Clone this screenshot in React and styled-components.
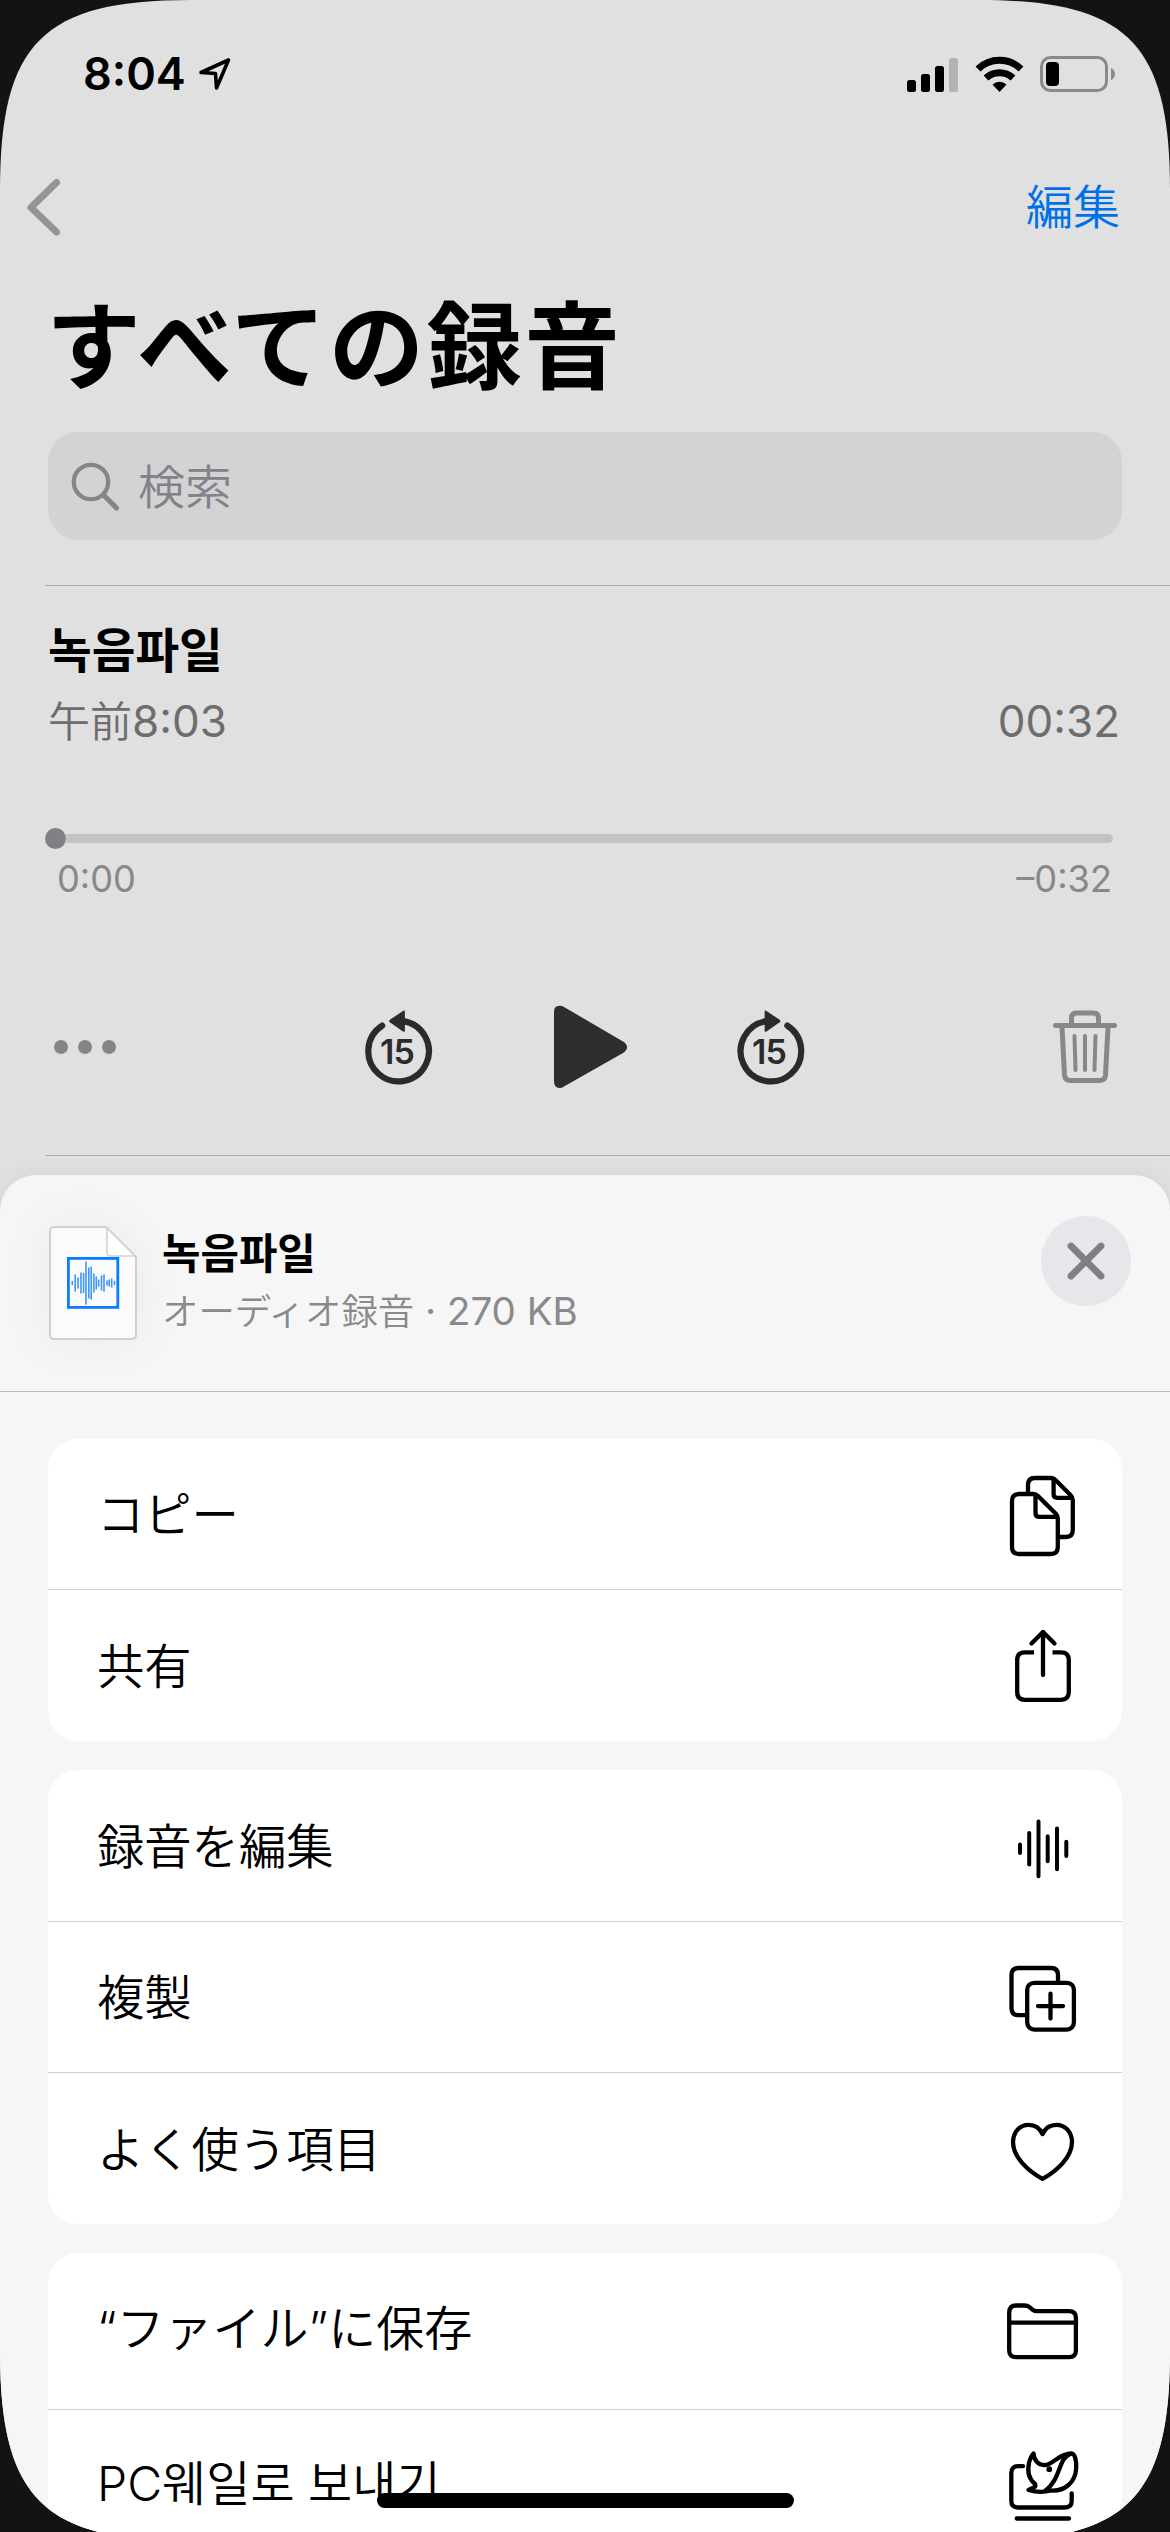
import React from "react";
import styled, { createGlobalStyle } from "styled-components";

const GlobalStyle = createGlobalStyle`
  * { box-sizing: border-box; }
  html, body { margin: 0; padding: 0; background: #131313; }
  svg { display: block; flex: none; }
`;

const latin = `Inter, Roboto, "Liberation Sans"`;

const Screen = styled.main`
  position: relative;
  display: flex;
  flex-direction: column;
  width: 1170px;
  height: 2532px;
  overflow: hidden;
  background: #e0e0e0;
  color: #000;
  font-family: ${latin}, "Noto Sans CJK JP", "Noto Sans CJK KR", sans-serif;
  clip-path: path("M0 190 C0 43 43 0 190 0 H980 C1127 0 1170 43 1170 190 V2351 C1170 2498 1127 2541 980 2541 H190 C43 2541 0 2498 0 2351 Z");
`;

const StatusBar = styled.header`
  display: flex;
  justify-content: space-between;
  align-items: center;
  height: 148px;
  padding: 0 54px 0 83px;
`;

const Clock = styled.div`
  display: flex;
  align-items: center;
  gap: 12px;
  font-size: 45px;
  font-weight: 600;
  line-height: 56px;
`;

const StatusIcons = styled.div`
  display: flex;
  align-items: center;
  gap: 16px;
`;

const NavBar = styled.nav`
  display: flex;
  justify-content: space-between;
  align-items: center;
  height: 117px;
  padding: 0 50px 0 24px;
`;

const EditLink = styled.a`
  margin-bottom: 5px;
  color: #0070ea;
  font-family: "Noto Sans CJK JP", sans-serif;
  font-size: 47px;
  font-weight: 350;
  line-height: 60px;
`;

const Title = styled.h1`
  margin: 16px 0 0 46px;
  font-family: "Noto Sans CJK JP", sans-serif;
  font-size: 95px;
  font-weight: 700;
  letter-spacing: 2.8px;
  line-height: 120px;
`;

const SearchField = styled.div`
  display: flex;
  align-items: center;
  gap: 18px;
  height: 108px;
  margin: 31px 48px 0;
  padding-left: 22px;
  border-radius: 30px;
  background: #d3d3d3;
`;

const Placeholder = styled.span`
  margin-bottom: 4px;
  color: #82828a;
  font-family: "Noto Sans CJK JP", sans-serif;
  font-size: 47px;
  font-weight: 350;
  line-height: 60px;
`;

const Hairline = styled.div`
  flex: none;
  height: 1px;
  margin: ${(p) => p.$top}px 0 0 45px;
  background: #acacae;
`;

const RecordingName = styled.h2`
  margin: 32px 0 0 48px;
  font-family: "Noto Sans CJK KR", sans-serif;
  font-size: 47.5px;
  font-weight: 700;
  line-height: 60px;
`;

const MetaRow = styled.div`
  display: flex;
  justify-content: space-between;
  height: 54px;
  margin-top: 16px;
  padding: 0 50px 0 48px;
  color: #6d6d6d;
  font-size: 44px;
  line-height: 54px;
`;

const Kanji = styled.span`
  font-family: "Noto Sans CJK JP", sans-serif;
  font-size: 42px;
  font-weight: 350;
  line-height: 0;
`;

const Slider = styled.div`
  display: flex;
  align-items: center;
  height: 21px;
  margin: 80px 57px 0 45px;
`;

const Knob = styled.div`
  width: 21px;
  height: 21px;
  border-radius: 50%;
  background: #808085;
`;

const Track = styled.div`
  flex: 1;
  height: 9px;
  border-radius: 0 5px 5px 0;
  background: #c3c3c3;
`;

const TimeRow = styled.div`
  display: flex;
  justify-content: space-between;
  margin-top: 10px;
  padding: 0 58px 0 57px;
  color: #888;
  font-size: 36.2px;
  line-height: 40px;
`;

const Controls = styled.div`
  display: flex;
  justify-content: space-between;
  align-items: center;
  height: 120px;
  margin-top: 88px;
  padding: 0 53px 0 54px;
`;

const Transport = styled.div`
  display: flex;
  justify-content: space-between;
  align-items: center;
  width: 440px;
`;

const Dots = styled.div`
  display: flex;
  gap: 10px;
`;

const Dot = styled.i`
  width: 14px;
  height: 14px;
  border-radius: 50%;
  background: #868686;
`;

const Sheet = styled.section`
  flex: 1;
  min-height: 0;
  margin-top: 19px;
  border-radius: 36px 36px 0 0;
  background: #f6f6f6;
  box-shadow: 0 0 24px rgba(0, 0, 0, 0.05);
`;

const SheetHeader = styled.div`
  display: flex;
  align-items: flex-start;
  height: 217px;
  padding: 41px 39px 0 49px;
  border-bottom: 1px solid #bbbbbe;
`;

const FileArt = styled.div`
  margin: 10px 25px 0 0;
  filter: drop-shadow(0 0 22px rgba(0, 0, 0, 0.05));
`;

const FileInfo = styled.div`
  flex: 1;
  padding-top: 6px;
`;

const FileName = styled.div`
  font-family: "Noto Sans CJK KR", sans-serif;
  font-size: 41.8px;
  font-weight: 700;
  line-height: 58px;
`;

const FileMeta = styled.div`
  margin-top: 3px;
  color: #8a8a8e;
  font-size: 38.5px;
  line-height: 56px;
`;

const FileKind = styled.span`
  font-family: "Noto Sans CJK JP", sans-serif;
  font-size: 36.4px;
  font-weight: 350;
  line-height: 0;
`;

const CloseButton = styled.button`
  display: grid;
  place-items: center;
  width: 90px;
  height: 90px;
  padding: 0;
  border: 0;
  border-radius: 50%;
  background: #e6e6eb;
`;

const Cards = styled.div`
  display: flex;
  flex-direction: column;
  gap: 29px;
  padding: 47px 48px 0;
`;

const Card = styled.ul`
  flex: none;
  margin: 0;
  padding: 0;
  list-style: none;
  border-radius: 30px;
  background: #fff;
  overflow: hidden;
`;

const Row = styled.li`
  display: flex;
  justify-content: space-between;
  align-items: center;
  height: ${(p) => p.$h}px;
  padding: 0 39px 0 49px;
  & + & { border-top: 1px solid #d0d0d2; }
`;

const RowLabel = styled.span`
  margin-bottom: 4px;
  font-family: ${(p) => (p.$mixed ? "Inter, " : "")}"Noto Sans CJK JP", "Noto Sans CJK KR", sans-serif;
  font-size: ${(p) => (p.$mixed ? 48 : 47.3)}px;
  font-weight: 350;
  line-height: 64px;
`;

const HomeIndicator = styled.div`
  position: absolute;
  left: 377px;
  bottom: 24px;
  width: 417px;
  height: 15px;
  border-radius: 8px;
  background: #000;
`;

const Glyph = ({ children, sw = 4.3 }) => (
  <svg width="80" height="90" viewBox="0 0 80 90" fill="none" stroke="#000" strokeWidth={sw} strokeLinecap="round" strokeLinejoin="round">
    {children}
  </svg>
);

const CopyIcon = () => (
  <Glyph>
    <path d="M25 24 V16 Q25 9 32 9 H48 Q50.500 9 52.500 11 L67.500 26 Q69.800 28 69.800 31 V61 Q69.800 68 62.800 68 H56" />
    <path d="M50.600 10 V25 Q50.600 28.800 54.400 28.800 H69" />
    <path d="M16 25 H30 Q33 25 35 27 L52.800 44.800 Q54.800 46.800 54.800 49.500 V78 Q54.800 85 47.800 85 H16 Q9 85 9 78 V32 Q9 25 16 25 Z" />
    <path d="M32.500 26 V44 Q32.500 47.900 36.400 47.900 H54" />
  </Glyph>
);

const ShareIcon = () => (
  <Glyph>
    <path strokeLinecap="butt" d="M31 31.400 H22 Q14.200 31.400 14.200 39 V71 Q14.200 78.800 22 78.800 H58 Q65.800 78.800 65.800 71 V39 Q65.800 31.400 58 31.400 H49.500" />
    <path d="M40 54 V11 M28.500 22.500 L40 11 L51.500 22.500" />
  </Glyph>
);

const WaveIcon = () => (
  <Glyph sw={4}>
    <path d="M17 43.500 V52 M26.200 32 V63.600 M35.500 20.500 V75.200 M44.700 35.300 V60.300 M54 27.500 V68.200 M63.300 40.800 V55" />
  </Glyph>
);

const DuplicateIcon = () => (
  <Glyph>
    <path d="M22 63.200 H15.500 Q8.500 63.200 8.500 56.200 V23 Q8.500 16 15.500 16 H48 Q55 16 55 23 V30" />
    <rect x="24.200" y="30.800" width="46.700" height="46.800" rx="7" />
    <path d="M47.500 41.700 V66.500 M35 54.100 H60" />
  </Glyph>
);

const HeartIcon = () => (
  <Glyph>
    <path d="M39.500 74.800 C25 67 10 53 10 38 C10 28 17 20.800 25.500 20.800 C32 20.800 37 24.500 39.500 30 C42 24.500 47 20.800 53.500 20.800 C62 20.800 69 28 69 38 C69 53 54 67 39.500 74.800 Z" />
  </Glyph>
);

const FolderIcon = () => (
  <Glyph>
    <path d="M6.200 27 Q6.200 19.500 13 19.500 H21.500 Q24.500 19.500 26.500 21.200 L29.500 23.700 Q31.500 25.200 34.500 25.200 H66 Q72.900 25.200 72.900 32 V64.500 Q72.900 71.200 66 71.200 H13 Q6.200 71.200 6.200 64.500 Z M7 36.600 H72" />
  </Glyph>
);

const WhaleIcon = () => (
  <Glyph>
    <path d="M20 25.200 H15 Q8.300 25.200 8.300 32 V60 Q8.300 66.500 15 66.500 H62 Q68.700 66.500 68.700 60 V52.500 M13.700 77.500 H66" />
    <path d="M30.500 12.500 C31 19 35 24.500 42 24 C51 23.500 54 13 69 12.500 C72 13 73.500 20 73.200 27 C72.500 42 61 50.500 48 49.500 C39 52 32 51 25.500 49 C29 46.500 34 47 32 43 C26 38 24 31 26 22 C27 18 28 15 30.500 12.500 Z" />
    <path d="M67 13 C55 18 58 38 42.500 49.500" />
    <circle cx="46.300" cy="28.200" r="2.900" fill="#000" stroke="none" />
  </Glyph>
);

const SkipIcon = ({ forward }) => (
  <svg width="68" height="80" viewBox="0 0 68 80">
    <g transform={forward ? "translate(67.500 0) scale(-1 1)" : undefined}>
      <path d="M17.200 18.600 A30.300 30.300 0 1 0 38 14.100" fill="none" stroke="#2b2b2b" strokeWidth="6.200" strokeLinecap="round" />
      <path d="M24.800 12.800 Q23.500 14 24.800 15.200 L38 24.500 Q39.900 25.500 39.900 23.500 V5 Q39.900 2.800 38 4 Z" fill="#2b2b2b" />
    </g>
    <text x="32" y="57" textAnchor="middle" fill="#2b2b2b" fontFamily="Inter, sans-serif" fontSize="34" fontWeight="600" letterSpacing="-1">15</text>
  </svg>
);

const bars = [[72.3, 1.5], [75.2, 8], [78, 5], [81, 10], [83.6, 9.5], [86, 21], [88.8, 15], [91.2, 16], [93.9, 9], [96.3, 6], [98.7, 3], [101.5, 7], [104, 8], [107, 2], [109.2, 3], [111.7, 4], [114.5, 1.5]];

const FileIcon = () => (
  <svg width="88" height="114" viewBox="0 0 88 114">
    <path d="M5 1 H57 L87 31 V109 Q87 113 83 113 H5 Q1 113 1 109 V5 Q1 1 5 1 Z" fill="#fbfbfb" stroke="#d0d0d0" strokeWidth="2" />
    <path d="M58 2 V26 Q58 30 62 30 H86 Z" fill="#fff" stroke="#d0d0d0" strokeWidth="1.500" />
    <rect x="19.400" y="32.400" width="49.400" height="49" fill="none" stroke="#0a7dff" strokeWidth="2.800" />
    {bars.map(([x, h]) => (
      <path key={x} d={`M${x - 49} ${57 - h} V${57 + h}`} stroke="#3d97f8" strokeWidth="1.600" strokeLinecap="round" />
    ))}
  </svg>
);

const groups = [
  [
    { label: "コピー", h: 150, Icon: CopyIcon },
    { label: "共有", h: 152, Icon: ShareIcon },
  ],
  [
    { label: "録音を編集", h: 151, Icon: WaveIcon },
    { label: "複製", h: 151, Icon: DuplicateIcon },
    { label: "よく使う項目", h: 152, Icon: HeartIcon },
  ],
  [
    { label: "“ファイル”に保存", h: 156, Icon: FolderIcon, mixed: true },
    { label: "PC웨일로 보내기", h: 152, Icon: WhaleIcon, mixed: true },
  ],
];

export default function App() {
  return (
    <>
      <GlobalStyle />
      <Screen>
        <StatusBar>
          <Clock>
            8:04
            <svg width="34" height="34" viewBox="0 0 34 34" fill="none" stroke="#000" strokeWidth="3.600" strokeLinejoin="round">
              <path d="M30.500 3 L3 15.500 L17.500 16.500 L18.500 31 Z" />
            </svg>
          </Clock>
          <StatusIcons>
            <svg width="52" height="36" viewBox="0 0 52 36">
              <rect x="0" y="24" width="9" height="12" rx="2.500" />
              <rect x="14" y="18" width="9" height="18" rx="2.500" />
              <rect x="28" y="10" width="9" height="26" rx="2.500" />
              <rect x="42" y="2" width="9" height="34" rx="2.500" fill="#b3b3b3" />
            </svg>
            <svg width="49" height="36" viewBox="0 0 49 36">
              <path d="M3 13 A31 31 0 0 1 46 13" fill="none" stroke="#000" strokeWidth="7" />
              <path d="M11 22 A20 20 0 0 1 38 22" fill="none" stroke="#000" strokeWidth="7" />
              <path d="M24.500 36 L17.500 28.500 A10.500 10.500 0 0 1 31.500 28.500 Z" />
            </svg>
            <svg width="76" height="36" viewBox="0 0 76 36">
              <rect x="1.500" y="1.500" width="65" height="33" rx="9" fill="none" stroke="#8a8a8a" strokeWidth="3" />
              <rect x="6" y="6" width="13" height="24" rx="4" />
              <path d="M71 12 Q75 14 75 18 Q75 22 71 24 Z" fill="#8a8a8a" />
            </svg>
          </StatusIcons>
        </StatusBar>

        <NavBar>
          <svg width="40" height="60" viewBox="0 0 40 60" fill="none" stroke="#959595" strokeWidth="7" strokeLinecap="round" strokeLinejoin="round">
            <path d="M32.500 5.500 L7 30.500 L32.500 55" />
          </svg>
          <EditLink>編集</EditLink>
        </NavBar>

        <Title>すべての録音</Title>

        <SearchField>
          <svg width="50" height="50" viewBox="0 0 50 50" fill="none" stroke="#868686" strokeLinecap="round">
            <circle cx="21" cy="21" r="17.200" strokeWidth="4.300" />
            <path d="M33.500 34 L46.500 47" strokeWidth="5.200" />
          </svg>
          <Placeholder>検索</Placeholder>
        </SearchField>

        <Hairline $top={45} />

        <RecordingName>녹음파일</RecordingName>
        <MetaRow>
          <span><Kanji>午前</Kanji>8:03</span>
          <span>00:32</span>
        </MetaRow>
        <Slider>
          <Knob />
          <Track />
        </Slider>
        <TimeRow>
          <span>0:00</span>
          <span>–0:32</span>
        </TimeRow>
        <Controls>
          <Dots><Dot /><Dot /><Dot /></Dots>
          <Transport>
            <SkipIcon />
            <svg width="88" height="84" viewBox="0 0 88 84">
              <path d="M13 7 Q13 0.700 18.500 0.700 Q21 0.700 23 2 L82 36.500 Q86 39 86 42 Q86 45.500 82 48 L23 81.500 Q21 83 18.500 83 Q13 83 13 76 Z" fill="#2d2d2d" />
            </svg>
            <SkipIcon forward />
          </Transport>
          <svg width="64" height="74" viewBox="0 0 64 74" fill="none" stroke="#888" strokeLinecap="round" strokeLinejoin="round">
            <path d="M2.500 15.500 H61.500" strokeWidth="5" />
            <path d="M18.500 14 V8 Q18.500 3 23.500 3 H40.500 Q45.500 3 45.500 8 V14" strokeWidth="5" />
            <path d="M9 17 L11.500 65 Q12 70.500 17.500 70.500 H46.500 Q52 70.500 52.500 65 L55 17" strokeWidth="5" />
            <path d="M21.500 26 L22.500 60 M32 26 V60 M42.500 26 L41.500 60" strokeWidth="4" />
          </svg>
        </Controls>

        <Hairline $top={48} />

        <Sheet>
          <SheetHeader>
            <FileArt><FileIcon /></FileArt>
            <FileInfo>
              <FileName>녹음파일</FileName>
              <FileMeta><FileKind>オーディオ録音</FileKind> · 270 KB</FileMeta>
            </FileInfo>
            <CloseButton aria-label="閉じる">
              <svg width="40" height="40" viewBox="0 0 40 40" stroke="#7f7f84" strokeWidth="6.800" strokeLinecap="round">
                <path d="M5 5 L35 35 M35 5 L5 35" />
              </svg>
            </CloseButton>
          </SheetHeader>
          <Cards>
            {groups.map((rows, i) => (
              <Card key={i}>
                {rows.map(({ label, h, Icon, mixed }) => (
                  <Row key={label} $h={h}>
                    <RowLabel $mixed={mixed}>{label}</RowLabel>
                    <Icon />
                  </Row>
                ))}
              </Card>
            ))}
          </Cards>
        </Sheet>
        <HomeIndicator />
      </Screen>
    </>
  );
}
